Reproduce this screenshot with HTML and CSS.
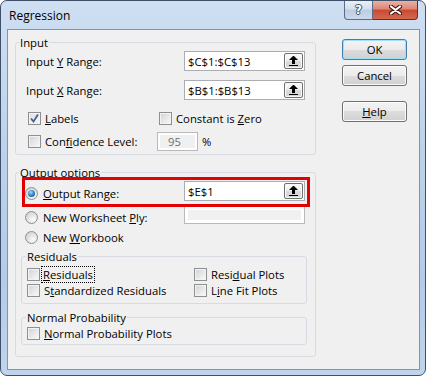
FILE: index.html
```html
<!DOCTYPE html>
<html lang="en">
<head>
    <meta charset="UTF-8">
    <title>Regression</title>
    <link rel="stylesheet" href="styles.css">
</head>
<body>
<div class="window">
    <div class="titlebar">
        <span class="title">Regression</span>
        <div class="caption">
            <span class="cap cap-help">?</span>
            <span class="cap cap-close">
                <svg width="13" height="10" viewBox="0 0 13 10">
                    <path d="M2 1.5 L11 8.5 M11 1.5 L2 8.5" stroke="#4a1a12" stroke-width="4.2" stroke-linecap="round"/>
                    <path d="M2 1.5 L11 8.5 M11 1.5 L2 8.5" stroke="#fff" stroke-width="2.2" stroke-linecap="round"/>
                </svg>
            </span>
        </div>
    </div>

    <div class="client">
        <div class="main">
            <fieldset class="group input-group">
                <legend>Input</legend>
                <div class="field-row">
                    <span class="field-label">Input <u>Y</u> Range:</span>
                    <div class="refedit"><span>$C$1:$C$13</span><span class="ref-btn"><svg width="9" height="10" viewBox="0 0 9 10"><path d="M4 0h1l4 4H0z"/><rect x="3" y="4" width="3" height="4"/><rect x="0" y="9" width="9" height="1"/></svg></span></div>
                </div>
                <div class="field-row">
                    <span class="field-label">Input <u>X</u> Range:</span>
                    <div class="refedit"><span>$B$1:$B$13</span><span class="ref-btn"><svg width="9" height="10" viewBox="0 0 9 10"><path d="M4 0h1l4 4H0z"/><rect x="3" y="4" width="3" height="4"/><rect x="0" y="9" width="9" height="1"/></svg></span></div>
                </div>
                <div class="check-row labels-row">
                    <label class="check col1"><span class="box checked"><svg width="11" height="11" viewBox="0 0 11 11"><path d="M2 5.5 L4.5 8.5 L9 1.5" fill="none" stroke="#44628f" stroke-width="1.8"/></svg></span><span><u>L</u>abels</span></label>
                    <label class="check"><span class="box"></span><span>Constant is <u>Z</u>ero</span></label>
                </div>
                <div class="check-row conf-row">
                    <label class="check conf-check"><span class="box"></span><span>Con<u>f</u>idence Level:</span></label>
                    <span class="disabled-edit small-edit">95</span>
                    <span class="pct">%</span>
                </div>
            </fieldset>

            <fieldset class="group output-group">
                <legend>Output options</legend>
                <div class="field-row out-row">
                    <label class="check field-label radio-label"><span class="radio on"></span><span><u>O</u>utput Range:</span></label>
                    <div class="refedit"><span>$E$1</span><span class="ref-btn"><svg width="9" height="10" viewBox="0 0 9 10"><path d="M4 0h1l4 4H0z"/><rect x="3" y="4" width="3" height="4"/><rect x="0" y="9" width="9" height="1"/></svg></span></div>
                    <span class="highlight"></span>
                </div>
                <div class="field-row ply-row">
                    <label class="check field-label radio-label"><span class="radio"></span><span>New Worksheet <u>P</u>ly:</span></label>
                    <span class="disabled-edit wide-edit"></span>
                </div>
                <div class="check-row workbook-row">
                    <label class="check radio-only"><span class="radio"></span><span>New <u>W</u>orkbook</span></label>
                </div>

                <fieldset class="group sub-group residuals">
                    <legend>Residuals</legend>
                    <div class="res-grid">
                        <label class="check"><span class="box"></span><span class="focus"><u>R</u>esiduals</span></label>
                        <label class="check"><span class="box"></span><span>Resi<u>d</u>ual Plots</span></label>
                        <label class="check"><span class="box"></span><span>S<u>t</u>andardized Residuals</span></label>
                        <label class="check"><span class="box"></span><span>L<u>i</u>ne Fit Plots</span></label>
                    </div>
                </fieldset>

                <fieldset class="group sub-group normal">
                    <legend>Normal Probability</legend>
                    <div class="check-row">
                        <label class="check"><span class="box"></span><span><u>N</u>ormal Probability Plots</span></label>
                    </div>
                </fieldset>
            </fieldset>
        </div>

        <div class="buttons">
            <button class="btn default">OK</button>
            <button class="btn cancel">Cancel</button>
            <button class="btn help"><u>H</u>elp</button>
        </div>
    </div>
</div>
</body>
</html>
```

FILE: styles.css
```css
* {
    box-sizing: border-box;
}

body {
    margin: 0;
    background-color: #fff;
    font-family: "Open Sans", "DejaVu Sans", sans-serif;
    font-size: 11.3px;
    line-height: 15px;
    color: #000;
}

u {
    text-underline-offset: 1px;
}

/* window frame */

.window {
    width: 426px;
    height: 376px;
    border: 1px solid #3f5169;
    border-radius: 7px;
    background: linear-gradient(#cfdff2, #bcd2ec 40%, #b4cce9 75%, #bfd4ed);
    display: flex;
    flex-direction: column;
    overflow: hidden;
}

.titlebar {
    height: 28px;
    display: flex;
    justify-content: space-between;
    align-items: flex-start;
}

.title {
    padding: 7px 0 0 8px;
    font-size: 12px;
}

.caption {
    display: flex;
    height: 19px;
    margin-right: 7px;
}

.cap {
    display: flex;
    align-items: center;
    justify-content: center;
    border: 1px solid #5b6d86;
    border-top: none;
}

.cap-help {
    width: 29px;
    border-radius: 0 0 0 4px;
    background: linear-gradient(#e9eff7, #d3dfed 45%, #bccde2 50%, #cbd9ea);
    color: #fff;
    font-family: "DejaVu Sans", sans-serif;
    font-weight: bold;
    font-size: 12px;
    text-shadow: 0 0 1px #333, 1px 0 0 #4b5a6e, -1px 0 0 #4b5a6e, 0 1px 0 #4b5a6e, 0 -1px 0 #4b5a6e;
}

.cap-close {
    width: 45px;
    border-left: none;
    border-color: #6b2a22;
    border-radius: 0 0 4px 0;
    background: linear-gradient(#ebb2a6, #dd8572 45%, #c74a33 50%, #d4684f);
}

.client {
    flex: 1;
    margin: 0 5px 5px 6px;
    border: 1px solid #7f94ae;
    background-color: #f0f0f0;
    display: flex;
    padding: 5px 0 0 7px;
}

.main {
    width: 301px;
}

/* group boxes */

.group {
    margin: 0;
    min-width: 0;
    border: 1px solid #d5dbe1;
    border-radius: 3px;
}

.group legend {
    padding: 0 1px;
    line-height: 15px;
}

.input-group {
    padding: 1px 0 3px 3px;
}

.output-group {
    margin-top: 10px;
    padding: 1px 0 11px 3px;
}

.sub-group {
    width: 286px;
    margin-left: 2px;
}

.sub-group legend {
    margin-left: -1px;
}

.residuals {
    margin-top: 4px;
    padding: 2px 0 5px 5px;
}

.normal {
    margin-top: 6px;
    padding: 0 0 3px 5px;
}

/* rows */

.field-row {
    display: flex;
    align-items: center;
    height: 20px;
}

.field-row + .field-row {
    margin-top: 9px;
}

.field-label {
    width: 165px;
    padding-left: 7px;
}

.refedit {
    width: 121px;
    height: 20px;
    border: 1px solid #abadb3;
    background-color: #fff;
    display: flex;
    align-items: center;
    padding-left: 3px;
}

.refedit span:first-child {
    flex: 1;
}

.ref-btn {
    width: 19px;
    height: 16px;
    margin-right: 1px;
    border: 1px solid #6f6f6f;
    border-radius: 2px;
    background: linear-gradient(#fbfbfb, #ececec 50%, #dcdcdc 50%, #d4d4d4);
    box-shadow: inset 0 0 0 1px #fafafa;
    display: flex;
    align-items: center;
    justify-content: center;
}

.check-row {
    display: flex;
    align-items: center;
    height: 16px;
}

.labels-row {
    margin-top: 10px;
    padding-left: 9px;
}

.col1 {
    width: 131px;
}

.conf-row {
    height: 19px;
    margin-top: 6px;
    padding-left: 9px;
}

.conf-check {
    width: 129px;
}

.check {
    display: flex;
    align-items: center;
    gap: 4px;
}

.box {
    width: 13px;
    height: 13px;
    flex: none;
    border: 1px solid #8e8f8f;
    background: linear-gradient(135deg, #cfd3d8, #eeeeee 70%, #fbfbfb);
    box-shadow: inset 0 0 0 1px #f3f3f3;
    display: flex;
    align-items: center;
    justify-content: center;
}

.box.checked {
    background: linear-gradient(135deg, #dde1e6, #f6f6f6);
}

.radio {
    width: 13px;
    height: 13px;
    flex: none;
    border: 1px solid #8e8f8f;
    border-radius: 50%;
    background: radial-gradient(circle at 65% 70%, #fdfdfd, #e4e4e4 45%, #c9c9c9);
    display: flex;
    align-items: center;
    justify-content: center;
}

.radio.on::after {
    content: "";
    width: 7px;
    height: 7px;
    border-radius: 50%;
    background: radial-gradient(circle at 40% 35%, #9fdcfb, #2a7cc0 55%, #0c3e6c);
}

.radio-label {
    gap: 5px;
    padding: 4px 0 0 6px;
}

.radio-only {
    gap: 5px;
    padding-left: 6px;
}

.disabled-edit {
    border: 1px solid #b9b9b9;
    background-color: #f0f0f0;
    box-shadow: inset 0 0 0 3px #fff;
}

.small-edit {
    width: 41px;
    height: 19px;
    padding-left: 10px;
    line-height: 17px;
    color: #6d6d6d;
    box-shadow: inset 0 0 0 2px #fff;
}

.wide-edit {
    width: 121px;
    height: 18px;
}

.pct {
    margin-left: 4px;
}

.out-row {
    position: relative;
}

.highlight {
    position: absolute;
    left: 3px;
    top: -4px;
    width: 288px;
    height: 30px;
    border: 3px solid #e40000;
}

.ply-row {
    height: 18px;
}

.field-row.ply-row {
    margin-top: 5px;
}

.workbook-row {
    margin-top: 5px;
}

.res-grid {
    display: grid;
    grid-template-columns: 167px auto;
    grid-auto-rows: 16px;
    align-items: center;
}

.focus {
    outline: 1px dotted #000;
    padding: 0 1px;
    margin-left: -2px;
}

/* buttons */

.buttons {
    display: flex;
    flex-direction: column;
    margin: 4px 0 0 26px;
}

.btn {
    width: 65px;
    height: 21px;
    padding: 0;
    border: 1px solid #707070;
    border-radius: 3px;
    background: linear-gradient(#f4f4f4, #ebebeb 50%, #dddddd 50%, #d0d0d0);
    box-shadow: inset 0 0 0 1px #fbfbfb;
    font-family: inherit;
    font-size: inherit;
    color: #000;
}

.btn.default {
    border-color: #3c7fb1;
    box-shadow: inset 0 0 0 1px #9fe0fb;
}

.btn.cancel {
    margin-top: 5px;
}

.btn.help {
    margin-top: 15px;
}
```
